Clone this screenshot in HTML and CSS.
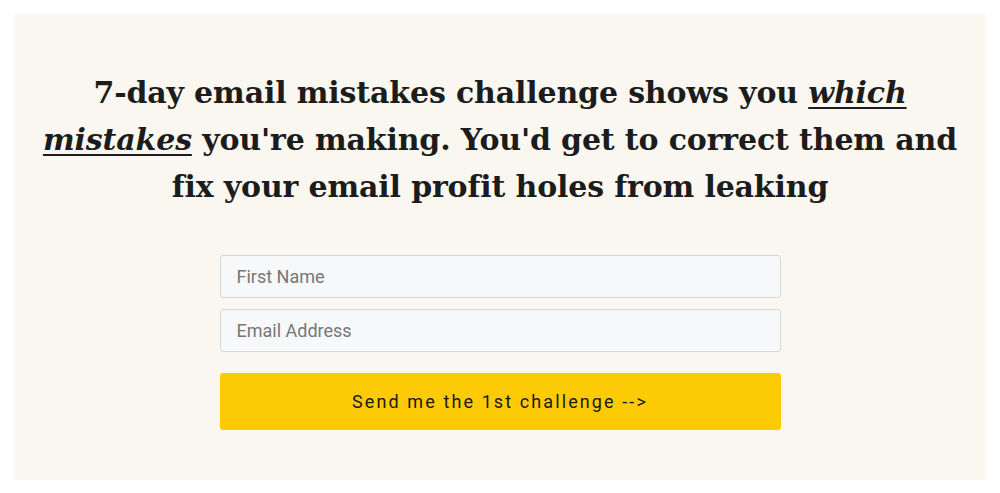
FILE: index.html
```html
<!DOCTYPE html>
<html lang="en">
<head>
<meta charset="utf-8">
<link rel="stylesheet" href="styles.css">
</head>
<body>
<div class="panel">
  <h1 class="headline">7-day email mistakes challenge shows you <em class="hl">which mistakes</em> you're making. You'd get to correct them and fix your email profit holes from leaking</h1>
  <form class="form">
    <input class="field" type="text" placeholder="First Name">
    <input class="field" type="email" placeholder="Email Address">
    <button class="submit" type="button">Send me the 1st challenge --&gt;</button>
  </form>
</div>
</body>
</html>
```
FILE: styles.css
```css
html, body { margin: 0; padding: 0; background: #ffffff; }
body { padding: 14px; }
.panel {
  background: #faf7f0;
  height: 466px;
  box-sizing: border-box;
  padding: 55px 20px 0;
  display: flex;
  flex-direction: column;
  align-items: center;
}
.headline {
  margin: 0;
  font-family: "DejaVu Serif", "Liberation Serif", serif;
  font-weight: bold;
  font-size: 30px;
  line-height: 47px;
  color: #1c1c1c;
  text-align: center;
  letter-spacing: -0.15px;
}
.hl { font-style: italic; text-decoration: underline; text-underline-offset: 4px; text-decoration-thickness: 2px; }
.form {
  margin-top: 45px;
  width: 561px;
  display: flex;
  flex-direction: column;
}
.field {
  height: 43px;
  box-sizing: border-box;
  border: 1px solid #d3d9d9;
  border-radius: 3px;
  background: #f6f8f9;
  padding: 0 16px;
  font-family: Roboto, sans-serif;
  font-size: 18px;
  color: #333;
  margin-bottom: 11px;
}
.field::placeholder { color: #777777; }
.submit {
  margin-top: 10px;
  height: 57px;
  border: none;
  border-radius: 3px;
  background: #fccb05;
  font-family: Roboto, sans-serif;
  font-size: 18px;
  letter-spacing: 2.1px;
  color: #1a1a1a;
}
```
